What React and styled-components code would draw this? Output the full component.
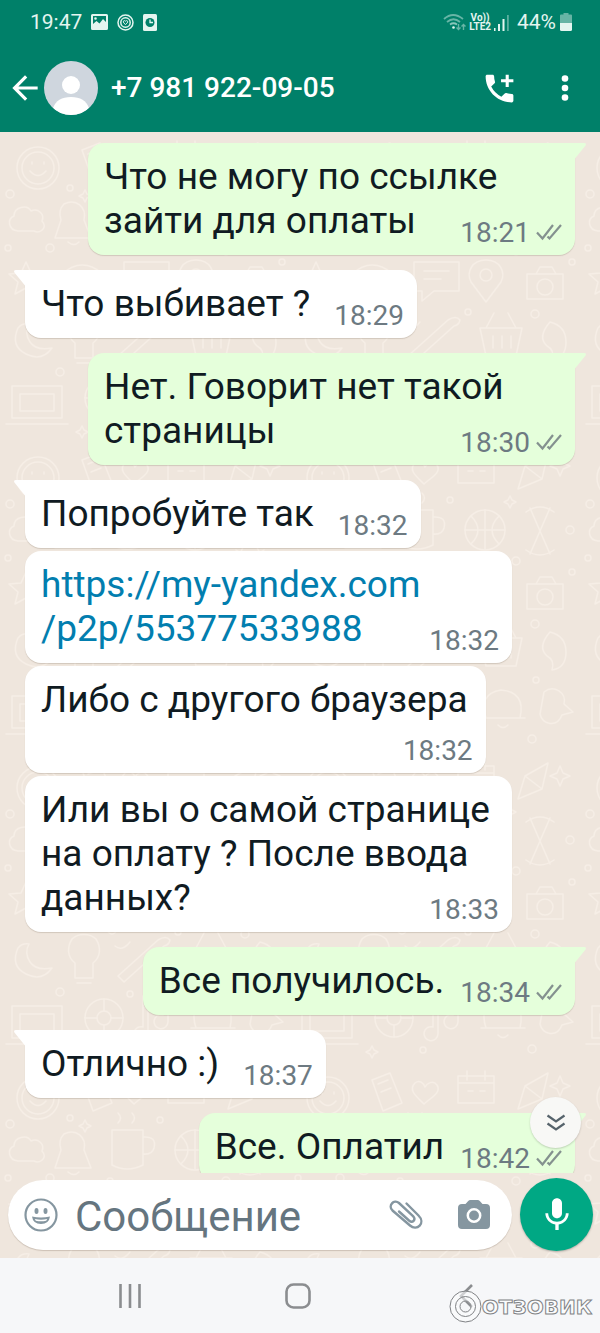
import React from 'react'
import styled, { createGlobalStyle, css } from 'styled-components'
import { MdAddIcCall, MdArrowBack, MdMic } from 'react-icons/md'

const colors = {
  header: '#008069',
  wallpaper: '#efe6dd',
  doodle: '#f6eee6',
  outgoing: '#e5ffdb',
  incoming: '#ffffff',
  text: '#101b22',
  meta: '#6d7a82',
  link: '#027eaf',
  icon: '#8596a0',
  accent: '#00a884',
  nav: '#f6f7f9'
}

const GlobalStyle = createGlobalStyle`
  * {
    box-sizing: border-box;
  }

  body {
    margin: 0;
    font-family: Roboto, 'Liberation Sans', sans-serif;
    color: ${colors.text};
  }

  button {
    display: flex;
    align-items: center;
    justify-content: center;
    padding: 0;
    border: 0;
    background: none;
    color: inherit;
    cursor: pointer;
  }

  svg {
    display: block;
    flex: none;
  }
`

const Screen = styled.div`
  display: flex;
  flex-direction: column;
  height: 100vh;
  overflow: hidden;
`

const Header = styled.header`
  background: ${colors.header};
  color: #fff;
`

const StatusBar = styled.div`
  display: flex;
  align-items: center;
  justify-content: space-between;
  height: 44px;
  padding: 0 28px 0 30px;
  font-size: 21px;
  line-height: 28px;
  color: #e4f5f0;
`

const StatusGroup = styled.div`
  display: flex;
  align-items: center;
  gap: ${props => props.$gap}px;
`

const Volte = styled.span`
  display: flex;
  flex-direction: column;
  align-items: center;
  font-size: 10px;
  font-weight: 700;
  line-height: 9px;
`

const Toolbar = styled.div`
  display: flex;
  align-items: center;
  height: 88px;
  padding: 0 2px 0 7px;
`

const Avatar = styled.span`
  width: 54px;
  height: 54px;
  margin-left: 1px;
  border-radius: 50%;
  overflow: hidden;
`

const Title = styled.h1`
  flex: 1;
  margin: 0 0 0 13px;
  font-size: 28px;
  font-weight: 500;
  line-height: 36px;
`

const ToolButton = styled.button`
  width: ${props => props.$width || 36}px;
  height: 48px;
`

const Chat = styled.main`
  position: relative;
  display: flex;
  flex: 1;
  flex-direction: column;
  min-height: 0;
  background: ${colors.wallpaper};
`

const WallpaperArt = styled.svg`
  position: absolute;
  inset: 0;
  width: 100%;
  height: 100%;
`

const Messages = styled.ul`
  position: relative;
  display: flex;
  flex: 1;
  flex-direction: column;
  min-height: 0;
  margin: 0;
  padding: 11px 25px 0;
  list-style: none;
  overflow-y: auto;
  scrollbar-width: none;
`

const Bubble = styled.li`
  position: relative;
  display: flow-root;
  flex: none;
  align-self: flex-start;
  max-width: calc(100% - 63px);
  margin-bottom: ${props => (props.$grouped ? 3 : 15)}px;
  padding: 12px 13px 8px 16px;
  border-radius: 16px;
  background: ${colors.incoming};
  box-shadow: 0 1px 1px rgba(80, 60, 40, 0.18);
  font-size: 37px;
  line-height: 44px;

  ${props => props.$tail && css`
    border-top-left-radius: 0;
  `}

  ${props => props.$outgoing && css`
    align-self: flex-end;
    background: ${colors.outgoing};
  `}

  ${props => props.$outgoing && props.$tail && css`
    border-top-left-radius: 16px;
    border-top-right-radius: 0;
  `}

  ${props => props.$stacked && css`
    display: flex;
    flex-direction: column;
  `}
`

const BubbleText = styled.span`
  ${props => props.$stacked && css`
    padding-right: 5px;
  `}
`

const TailShape = styled.svg`
  position: absolute;
  top: 0;
  ${props => (props.$outgoing ? 'left: 100%' : 'right: 100%')};
  fill: ${props => (props.$outgoing ? colors.outgoing : colors.incoming)};
`

const Meta = styled.span`
  display: flex;
  float: right;
  align-items: center;
  align-self: flex-end;
  gap: 6px;
  margin-top: ${props => (props.$stacked ? 15 : 20)}px;
  margin-left: ${props => (props.$outgoing ? 16 : 24)}px;
  font-size: 28px;
  line-height: 28px;
  color: ${colors.meta};
`

const Link = styled.a`
  color: ${colors.link};
  text-decoration: none;
`

const ScrollDown = styled.button`
  position: absolute;
  right: 19px;
  bottom: 110px;
  width: 51px;
  height: 51px;
  border-radius: 50%;
  background: #f8f8f6;
  box-shadow: 0 1px 2px rgba(0, 0, 0, 0.18);
`

const Composer = styled.form`
  position: relative;
  display: flex;
  align-items: center;
  gap: 8px;
  padding: 5px 7px 7px 8px;
`

const InputPill = styled.div`
  display: flex;
  flex: 1;
  align-items: center;
  min-width: 0;
  height: 70px;
  padding: 0 20px 0 15px;
  border-radius: 35px;
  background: #fff;
  box-shadow: 0 1px 1px rgba(80, 60, 40, 0.22);
  color: ${colors.icon};
`

const MessageInput = styled.input`
  flex: 1;
  min-width: 0;
  height: 60px;
  margin: 0 12px 0 16px;
  padding: 4px 0 0;
  border: 0;
  outline: 0;
  background: none;
  color: ${colors.text};
  font-family: inherit;
  font-size: 42px;

  &::placeholder {
    color: #65757f;
    opacity: 1;
  }
`

const PillButton = styled.button`
  width: 36px;
  height: 48px;

  & + & {
    margin-left: 32px;
  }
`

const MicButton = styled.button`
  width: 73px;
  height: 73px;
  border-radius: 50%;
  background: ${colors.accent};
  box-shadow: 0 1px 2px rgba(0, 0, 0, 0.25);
  color: #fff;
`

const NavBar = styled.nav`
  position: relative;
  display: grid;
  grid-template-columns: repeat(3, 1fr);
  height: 75px;
  padding: 0 50px 0 46px;
  background: ${colors.nav};
  color: #8b8d90;
`

const Watermark = styled.div`
  position: absolute;
  right: 8px;
  bottom: 10px;
  display: flex;
  align-items: center;
  font-family: 'DejaVu Sans', sans-serif;
  font-size: 20px;
  font-weight: 700;
  line-height: 32px;
  color: #fbfcfd;
  -webkit-text-stroke: 1px #808285;
`

const messages = [
  { text: 'Что не могу по ссылке зайти для оплаты', time: '18:21', outgoing: true, tail: true },
  { text: 'Что выбивает ?', time: '18:29', tail: true },
  { text: 'Нет. Говорит нет такой страницы', time: '18:30', outgoing: true, tail: true },
  { text: 'Попробуйте так', time: '18:32', tail: true, grouped: true },
  {
    text: <Link href='https://my-yandex.com/p2p/55377533988'>https://my-yandex.com<wbr />/p2p/55377533988</Link>,
    time: '18:32',
    grouped: true
  },
  { text: 'Либо с другого браузера', time: '18:32', grouped: true, stacked: true },
  { text: 'Или вы о самой странице на оплату ? После ввода данных?', time: '18:33' },
  { text: 'Все получилось.', time: '18:34', outgoing: true, tail: true },
  { text: 'Отлично :)', time: '18:37', tail: true },
  { text: 'Все. Оплатил', time: '18:42', outgoing: true, tail: true }
]

const Tail = ({ outgoing }) => (
  <TailShape $outgoing={outgoing} width='11' height='16' viewBox='0 0 11 16'>
    <path d={outgoing ? 'M0 0H9Q12 0 10.400 2.800L0 15.500Z' : 'M11 0H2Q-1 0 .600 2.800L11 15.500Z'} />
  </TailShape>
)

const Ticks = () => (
  <svg width='26' height='18' viewBox='0 0 26 18' fill='none' stroke='#84918f' strokeWidth='2.200'>
    <path d='M1 8.500L6.500 14.500L17 1M11.500 12.500L13.500 14.500L25 1' />
  </svg>
)

const Message = ({ text, time, outgoing, tail, grouped, stacked }) => (
  <Bubble $outgoing={outgoing} $tail={tail} $grouped={grouped} $stacked={stacked}>
    {tail && <Tail outgoing={outgoing} />}
    <BubbleText $stacked={stacked}>{text}</BubbleText>
    <Meta $outgoing={outgoing} $stacked={stacked}>
      <time>{time}</time>
      {outgoing && <Ticks />}
    </Meta>
  </Bubble>
)

const Wallpaper = () => (
  <WallpaperArt aria-hidden='true'>
    <defs>
      <pattern id='doodles' width='290' height='310' patternUnits='userSpaceOnUse'>
        <g fill='none' stroke={colors.doodle} strokeWidth='1.500' strokeLinecap='round' strokeLinejoin='round'>
          <circle cx='38' cy='36' r='21' />
          <circle cx='38' cy='36' r='16' />
          <path d='M30 39q8 9 16 0M32 30v2M44 30v2' />
          <path d='M82 18l18-7 12 30-19 8zM88 22l10-4M91 30l10-4' />
          <path d='M134 42c-8-8-16-14-9-21 5-4 9 1 10 4 2-4 8-7 12-2 5 8-7 13-13 19z' />
          <path d='M168 14h36v27h-36zM168 21h36M177 9v9M195 9v9M178 29h5M190 29h5' />
          <path d='M228 47l7-23 23-13-6 26zM235 24l17 13' />
          <path d='M270 14l3 7 7 3-7 3-3 7-3-7-7-3 7-3z' />
          <path d='M14 84c0-9 13-12 17-5 7-3 14 3 11 10 6 7-2 13-8 10H18c-10-1-11-12-4-15z' />
          <path d='M64 72c12-6 23 3 20 16l7 18H55l6-18c-2-6-1-12 3-16zM68 110q6 5 11 0' />
          <path d='M112 68h31v35q-16 8-31 0zM143 75q14-1 11 11-2 7-11 6M118 61q5-5 0-10M132 61q5-5 0-10' />
          <circle cx='195' cy='88' r='20' />
          <path d='M175 88h40M195 68v40M181 74q14 14 0 28M209 74q-14 14 0 28' />
          <path d='M240 66l20 46M260 66l-20 46M236 70q14-10 28 0M236 108q14 10 28 0' />
          <path d='M26 130l5 11 12 1-9 8 3 12-11-6-11 6 3-12-9-8 12-1z' />
          <path d='M62 142q20-18 41 0-2 20-20 22-19-2-21-22zM70 142h25M75 149q8 6 15 0' />
          <path d='M124 130h45v29h-25l-12 10v-10h-8zM134 139h25M134 147h17' />
          <path d='M196 128c14 0 20 12 15 22l-15 20-15-20c-5-10 1-22 15-22z' />
          <circle cx='196' cy='143' r='6' />
          <path d='M237 142h36v25h-36zM246 142l4-7h12l4 7' />
          <circle cx='255' cy='155' r='8' />
          <path d='M18 196q-8 18 8 26t26-6q-16 3-22-6t-1-18q-7-1-11 4z' />
          <path d='M72 187c-5 8-5 18 3 24v15h18v-15c8-6 8-16 3-24-6-6-18-6-24 0zM77 231h14' />
          <path d='M118 224l40-36M124 230l40-36M118 224l6 6M158 188q8-5 12 0-1 5-6 6M130 190q-8 10-15 4' />
          <path d='M190 196h42l-6 28h-30zM196 196l8-15M226 196l-8-15M203 204v12M212 204v12M221 204v12' />
          <path d='M260 190q16 4 16 20t-14 18q3-10-5-14-10-9 3-24z' />
          <path d='M12 254h50v32H12zM6 292h62M20 262h34v17H20z' />
          <circle cx='104' cy='266' r='19' />
          <circle cx='104' cy='266' r='7' />
          <path d='M104 247v12M104 273v12M85 266h12M111 266h12' />
          <path d='M148 252v30a7 7 0 11-5-7v-31l25-5v31a7 7 0 11-5-7' />
          <path d='M196 276q-8-24 15-28 25 2 19 28zM191 276h44M208 283q5 5 10 0' />
          <path d='M254 250c10-8 23 1 20 12l9 8-11 3c-5 13-20 10-22-1z' />
          <circle cx='8' cy='116' r='3' />
          <circle cx='50' cy='116' r='4' />
          <circle cx='110' cy='119' r='3' />
          <circle cx='160' cy='58' r='3' />
          <circle cx='226' cy='119' r='4' />
          <circle cx='280' cy='88' r='4' />
          <circle cx='282' cy='130' r='3' />
          <circle cx='58' cy='176' r='3' />
          <circle cx='112' cy='178' r='4' />
          <circle cx='178' cy='180' r='3' />
          <circle cx='245' cy='182' r='4' />
          <circle cx='60' cy='240' r='4' />
          <circle cx='130' cy='242' r='3' />
          <circle cx='184' cy='240' r='4' />
          <circle cx='246' cy='238' r='3' />
          <circle cx='70' cy='56' r='3' />
          <circle cx='10' cy='62' r='4' />
          <circle cx='133' cy='298' r='3' />
          <circle cx='242' cy='297' r='4' />
          <path d='M85 58l2 4 4 2-4 2-2 4-2-4-4-2 4-2zM220 54l2 4 4 2-4 2-2 4-2-4-4-2 4-2zM82 294l2 4 4 2-4 2-2 4-2-4-4-2 4-2z' />
        </g>
      </pattern>
    </defs>
    <rect width='100%' height='100%' fill='url(#doodles)' />
  </WallpaperArt>
)

const PictureIcon = () => (
  <svg width='17' height='16' viewBox='0 0 17 16'>
    <path fill='currentColor' fillRule='evenodd' d='M1.500 0h14Q17 0 17 1.500v13q0 1.500-1.500 1.500h-14Q0 16 0 14.500v-13Q0 0 1.500 0zM2 2v8l3.500-3 3 2.500L12 5l3 3V2zM4.500 3.200a1.300 1.300 0 100 2.600 1.300 1.300 0 000-2.600z' />
  </svg>
)

const BadgeIcon = () => (
  <svg width='17' height='17' viewBox='0 0 17 17' fill='none' stroke='currentColor' strokeWidth='1.500'>
    <circle cx='8.500' cy='8.500' r='7.500' />
    <circle cx='8.500' cy='8.500' r='4.700' />
    <path d='M6.300 7.200q1.100-1.200 2.200 0 1.100-1.200 2.200 0 .3 1.800-2.200 3.300-2.500-1.500-2.200-3.300z' strokeWidth='1' />
  </svg>
)

const ClockIcon = () => (
  <svg width='14' height='17' viewBox='0 0 14 17'>
    <rect width='14' height='17' rx='1.500' fill='currentColor' />
    <circle cx='7' cy='8.500' r='4.500' fill={colors.header} />
    <path d='M7 5.500v3h3' fill='none' stroke='currentColor' strokeWidth='1.300' />
  </svg>
)

const WifiIcon = () => (
  <svg width='23' height='18' viewBox='0 0 23 18' fill='none' stroke='currentColor' strokeWidth='1.800'>
    <g opacity='.45'>
      <path d='M1 6q9-8 19 0M4 9q6.500-5.500 13 0' />
      <path d='M15.500 11v5.500M13.500 14.500l2 2 2-2M20.500 17v-5.500M18.500 13.500l2-2 2 2' strokeWidth='1.400' />
    </g>
    <path d='M7 11.500q3.500-2.500 7 0' opacity='.6' />
    <circle cx='10.500' cy='14.500' r='1.300' fill='currentColor' stroke='none' />
  </svg>
)

const SignalIcon = () => (
  <svg width='15' height='17' viewBox='0 0 15 17' fill='currentColor'>
    <path d='M0 14h1.500v3H0zM4 10h2v7H4zM8.500 5h2v12h-2z' />
    <path d='M13 1h1.800v16H13z' opacity='.4' />
  </svg>
)

const BatteryIcon = () => (
  <svg width='12' height='18' viewBox='0 0 12 18' fill='currentColor'>
    <path d='M3.500 0h5v1.500H11q1 0 1 1V10H0V2.500q0-1 1-1h2.500z' opacity='.45' />
    <path d='M0 10h12v6.500q0 1.500-1.500 1.500h-9Q0 18 0 16.500z' />
  </svg>
)

const PersonIcon = () => (
  <svg width='54' height='54' viewBox='0 0 54 54'>
    <rect width='54' height='54' fill='#cfd6de' />
    <g fill='#fff'>
      <circle cx='27' cy='24' r='9' />
      <path d='M9 47q4-11 18-11t18 11l-6 7H15z' />
    </g>
  </svg>
)

const MoreIcon = () => (
  <svg width='8' height='28' viewBox='0 0 8 28' fill='currentColor'>
    <circle cx='4' cy='4.500' r='3.300' />
    <circle cx='4' cy='14' r='3.300' />
    <circle cx='4' cy='23.500' r='3.300' />
  </svg>
)

const SmileIcon = () => (
  <svg width='34' height='34' viewBox='0 0 34 34' fill='currentColor'>
    <circle cx='17' cy='17' r='15.500' fill='none' stroke='currentColor' strokeWidth='2.200' />
    <ellipse cx='12.500' cy='13' rx='2' ry='3' />
    <ellipse cx='21.500' cy='13' rx='2' ry='3' />
    <path fillRule='evenodd' d='M8 18.500q9 2 18 0-1 7.500-9 7.500t-9-7.500zM10.800 21q6.200 1.300 12.400 0l-1 1.800q-5.200 1-10.400 0z' />
  </svg>
)

const ClipIcon = () => (
  <svg width='34' height='30' viewBox='0 0 34 30' fill='none' stroke='currentColor' strokeWidth='2.400' strokeLinecap='round'>
    <path d='M17.500 3.500L29.500 15.500C37 23 28 31.500 21 25.500L3.500 10.500C-1.500 5.500 5 -1 10 3L24 16C27.500 20 23.500 23.500 20 20.500L10 11.500' />
  </svg>
)

const CameraIcon = () => (
  <svg width='32' height='29' viewBox='0 0 32 29'>
    <path fill='currentColor' d='M12.500 0h7q1.500 0 2.500 1.300L24.500 4H28q4 0 4 4v17q0 4-4 4H4q-4 0-4-4V8q0-4 4-4h3.500L10 1.300Q11 0 12.500 0z' />
    <circle cx='16' cy='15.500' r='6.200' fill='none' stroke='#fff' strokeWidth='2.500' />
  </svg>
)

const ChevronsIcon = () => (
  <svg width='20' height='18' viewBox='0 0 20 18' fill='none' stroke='#56636b' strokeWidth='2.200'>
    <path d='M1.500 1.500l8.500 6 8.500-6M1.500 9.500l8.500 6 8.500-6' />
  </svg>
)

const App = () => (
  <Screen>
    <GlobalStyle />
    <Header>
      <StatusBar>
        <StatusGroup $gap={9}>
          <time>19:47</time>
          <PictureIcon />
          <BadgeIcon />
          <ClockIcon />
        </StatusGroup>
        <StatusGroup $gap={8}>
          <StatusGroup $gap={3}>
            <WifiIcon />
            <Volte><span>Vo))</span><span>LTE2</span></Volte>
            <SignalIcon />
          </StatusGroup>
          <StatusGroup $gap={4}>
            <span>44%</span>
            <BatteryIcon />
          </StatusGroup>
        </StatusGroup>
      </StatusBar>
      <Toolbar>
        <ToolButton type='button' aria-label='Назад'><MdArrowBack size={38} /></ToolButton>
        <Avatar><PersonIcon /></Avatar>
        <Title>+7 981 922-09-05</Title>
        <ToolButton type='button' aria-label='Позвонить' $width={66}><MdAddIcCall size={37} /></ToolButton>
        <ToolButton type='button' aria-label='Ещё' $width={66}><MoreIcon /></ToolButton>
      </Toolbar>
    </Header>

    <Chat>
      <Wallpaper />
      <Messages>
        {messages.map((message, index) => <Message key={index} {...message} />)}
      </Messages>
      <ScrollDown type='button' aria-label='Вниз'><ChevronsIcon /></ScrollDown>
      <Composer onSubmit={event => event.preventDefault()}>
        <InputPill>
          <PillButton type='button' aria-label='Эмодзи'><SmileIcon /></PillButton>
          <MessageInput type='text' aria-label='Сообщение' placeholder='Сообщение' />
          <PillButton type='button' aria-label='Прикрепить'><ClipIcon /></PillButton>
          <PillButton type='button' aria-label='Камера'><CameraIcon /></PillButton>
        </InputPill>
        <MicButton type='button' aria-label='Голосовое сообщение'><MdMic size={40} /></MicButton>
      </Composer>
    </Chat>

    <NavBar>
      <button type='button' aria-label='Недавние'>
        <svg width='24' height='24' viewBox='0 0 24 24' stroke='currentColor' strokeWidth='2.600'>
          <path d='M2.500 0v24M12 0v24M21.500 0v24' />
        </svg>
      </button>
      <button type='button' aria-label='Домой'>
        <svg width='26' height='26' viewBox='0 0 26 26' fill='none' stroke='currentColor' strokeWidth='2.600'>
          <rect x='1.500' y='1.500' width='23' height='23' rx='7' />
        </svg>
      </button>
      <button type='button' aria-label='Назад'>
        <svg width='14' height='24' viewBox='0 0 14 24' fill='none' stroke='currentColor' strokeWidth='2.600'>
          <path d='M13 1L2 12l11 11' />
        </svg>
      </button>
      <Watermark>
        <svg width='33' height='33' viewBox='0 0 33 33' fill='none'>
          <g stroke='#fbfcfd' strokeWidth='5' opacity='.6'>
            <circle cx='16.500' cy='16.500' r='12.800' />
            <circle cx='16.500' cy='16.500' r='7.500' />
          </g>
          <g stroke='#808285' strokeWidth='1'>
            <circle cx='16.500' cy='16.500' r='15.500' />
            <circle cx='16.500' cy='16.500' r='10' />
            <circle cx='16.500' cy='16.500' r='5.500' />
          </g>
        </svg>
        ОТЗОВИК
      </Watermark>
    </NavBar>
  </Screen>
)

export default App
